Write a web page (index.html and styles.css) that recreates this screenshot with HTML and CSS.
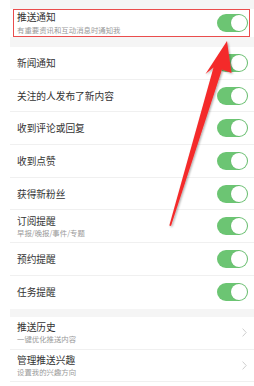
FILE: index.html
```html
<!DOCTYPE html>
<html lang="zh-CN">
<head>
<meta charset="utf-8">
<title>推送通知设置</title>
<link rel="stylesheet" href="styles.css">
</head>
<body>
<div class="page">
  <div class="gap gap-top"></div>
  <div class="section">
    <div class="row row-main highlighted">
      <div class="text">
        <div class="title">推送通知</div>
        <div class="sub">有重要资讯和互动消息时通知我</div>
      </div>
      <span class="switch"></span>
    </div>
  </div>
  <div class="gap gap-mid"></div>
  <div class="section">
    <div class="row"><div class="text"><div class="title">新闻通知</div></div><span class="switch"></span></div>
    <div class="row"><div class="text"><div class="title">关注的人发布了新内容</div></div><span class="switch"></span></div>
    <div class="row"><div class="text"><div class="title">收到评论或回复</div></div><span class="switch"></span></div>
    <div class="row"><div class="text"><div class="title">收到点赞</div></div><span class="switch"></span></div>
    <div class="row"><div class="text"><div class="title">获得新粉丝</div></div><span class="switch"></span></div>
    <div class="row"><div class="text"><div class="title">订阅提醒</div><div class="sub">早报/晚报/事件/专题</div></div><span class="switch"></span></div>
    <div class="row"><div class="text"><div class="title">预约提醒</div></div><span class="switch"></span></div>
    <div class="row last"><div class="text"><div class="title">任务提醒</div></div><span class="switch"></span></div>
  </div>
  <div class="gap gap-low"></div>
  <div class="section">
    <div class="row row-link"><div class="text"><div class="title">推送历史</div><div class="sub">一键优化推送内容</div></div>
      <svg class="chev" width="5" height="9" viewBox="0 0 5 9"><polyline points="0.6,0.6 4.2,4.5 0.6,8.4" fill="none" stroke="#c8c8c8" stroke-width="0.9"/></svg></div>
    <div class="row row-link short"><div class="text"><div class="title">管理推送兴趣</div><div class="sub">设置我的兴趣方向</div></div>
      <svg class="chev" width="5" height="9" viewBox="0 0 5 9"><polyline points="0.6,0.6 4.2,4.5 0.6,8.4" fill="none" stroke="#c8c8c8" stroke-width="0.9"/></svg></div>
  </div>
</div>
<svg class="arrow" width="254" height="386" viewBox="0 0 254 386">
  <defs>
    <filter id="sh" x="-20%" y="-20%" width="140%" height="140%">
      <feDropShadow dx="1" dy="1" stdDeviation="0.8" flood-color="#000" flood-opacity="0.35"/>
    </filter>
  </defs>
  <polygon filter="url(#sh)" fill="#f42c2c" points="227,41 231.5,73 222,69.5 171,226 169.3,225.5 213.5,67.5 205.5,74"/>
</svg>
</body>
</html>
```

FILE: styles.css
```css
html, body {
  margin: 0;
  padding: 0;
  background: #ffffff;
}
body {
  width: 254px;
  height: 386px;
  overflow: hidden;
  position: relative;
  font-family: "Noto Sans CJK SC", "Noto Sans", sans-serif;
}
.page {
  margin-left: 10px;
  background: #f5f5f5;
}
.gap-top { height: 9px; }
.gap-mid { height: 10px; }
.gap-low { height: 8.4px; }
.section {
  background: #ffffff;
}
.row {
  display: flex;
  align-items: center;
  justify-content: space-between;
  height: 32.7px;
  box-sizing: border-box;
  padding: 0 6px 0 7px;
  border-bottom: 1px solid #f0f0f0;
}
.row.last { border-bottom: none; }
.row-main {
  height: 28px;
  border-bottom: none;
  position: relative;
}
.highlighted::after {
  content: "";
  position: absolute;
  top: 0;
  bottom: 0.3px;
  left: 2.7px;
  right: 4px;
  border: 1.6px solid #ea4d4d;
  pointer-events: none;
}
.row-link {
  height: 33px;
  padding-right: 7px;
}
.row-link.short { height: 32.6px; }
.text {
  display: flex;
  flex-direction: column;
  gap: 1.2px;
}
.title {
  font-size: 9.7px;
  line-height: 12px;
  color: #333333;
  white-space: nowrap;
}
.sub {
  font-size: 7.4px;
  line-height: 10px;
  color: #9a9a9a;
  white-space: nowrap;
}
.switch {
  position: relative;
  flex: none;
  width: 31px;
  height: 18px;
  border-radius: 9px;
  background: #6cc573;
}
.switch::after {
  content: "";
  position: absolute;
  top: 1px;
  right: 1px;
  width: 16px;
  height: 16px;
  border-radius: 50%;
  background: #ffffff;
  box-shadow: 0 0 0 0.5px rgba(0,0,0,0.08);
}
.chev {
  flex: none;
  display: block;
}
.arrow {
  position: absolute;
  top: 0;
  left: 0;
  pointer-events: none;
}
```
